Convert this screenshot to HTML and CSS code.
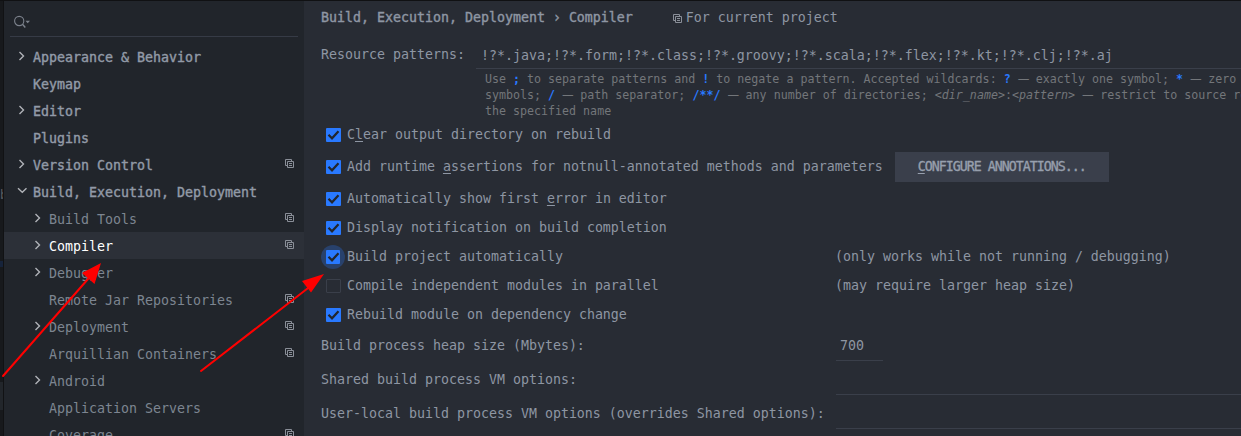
FILE: index.html
```html
<!DOCTYPE html>
<html lang="en">
<head>
<meta charset="utf-8">
<title>Settings</title>
<link rel="stylesheet" href="styles.css">
</head>
<body>
<svg class="defs" width="0" height="0">
  <symbol id="right" viewBox="0 0 10 10"><path d="M2.5 1 L6.5 5 L2.5 9" fill="none" stroke="#b0b3b8" stroke-width="1.4"/></symbol>
  <symbol id="down" viewBox="0 0 10 10"><path d="M1 2.2 L5.300 6.200 L9.500 2.200" fill="none" stroke="#b0b3b8" stroke-width="1.4"/></symbol>
  <symbol id="copy" viewBox="0 0 9 9"><path d="M2.5 6.5H.5V.5H6.5V2.5M2.5 2.5H8.5V8.5H2.5ZM4 4.5H7M4 6.5H7" fill="none" stroke="#8a8f98" stroke-width="1"/></symbol>
  <symbol id="check" viewBox="0 0 15 14"><path d="M2.5 6.800 L6 10.300 L12.500 3.200" fill="none" stroke="#22262d" stroke-width="2.200"/></symbol>
</svg>
<div class="window">
  <div class="backdrop"><span class="stray">b</span><i class="mark"></i><i class="tab"></i></div>
  <aside class="sidebar">
    <div class="search">
      <svg width="18" height="14" viewBox="0 0 18 14"><circle cx="5.200" cy="6" r="4.600" fill="none" stroke="#7c828c" stroke-width="1.1"/><path d="M8.500 9.200L11.300 12.500" stroke="#7c828c" stroke-width="1.4"/><path d="M11.500 5.700H16L13.700 8.300Z" fill="#7c828c"/></svg>
    </div>
    <ul class="tree">
      <li class="top"><svg class="chev"><use href="#right"/></svg><span>Appearance &amp; Behavior</span></li>
      <li class="top"><i class="chev"></i><span>Keymap</span></li>
      <li class="top"><svg class="chev"><use href="#right"/></svg><span>Editor</span></li>
      <li class="top"><i class="chev"></i><span>Plugins</span></li>
      <li class="top"><svg class="chev"><use href="#right"/></svg><span>Version Control</span><svg class="copy"><use href="#copy"/></svg></li>
      <li class="top"><svg class="chev"><use href="#down"/></svg><span>Build, Execution, Deployment</span></li>
      <li class="sub"><svg class="chev"><use href="#right"/></svg><span>Build Tools</span><svg class="copy"><use href="#copy"/></svg></li>
      <li class="sub selected"><svg class="chev"><use href="#right"/></svg><span>Compiler</span><svg class="copy"><use href="#copy"/></svg></li>
      <li class="sub"><svg class="chev"><use href="#right"/></svg><span>Debugger</span></li>
      <li class="sub"><i class="chev"></i><span>Remote Jar Repositories</span><svg class="copy"><use href="#copy"/></svg></li>
      <li class="sub"><svg class="chev"><use href="#right"/></svg><span>Deployment</span><svg class="copy"><use href="#copy"/></svg></li>
      <li class="sub"><i class="chev"></i><span>Arquillian Containers</span><svg class="copy"><use href="#copy"/></svg></li>
      <li class="sub"><svg class="chev"><use href="#right"/></svg><span>Android</span></li>
      <li class="sub"><i class="chev"></i><span>Application Servers</span></li>
      <li class="sub"><i class="chev"></i><span>Coverage</span><svg class="copy"><use href="#copy"/></svg></li>
    </ul>
  </aside>
  <main class="content">
    <header class="crumbs"><h1>Build, Execution, Deployment › Compiler</h1><svg class="scope-icon"><use href="#copy"/></svg><span>For current project</span></header>
    <div class="patterns"><label>Resource patterns:</label><div class="field">!?*.java;!?*.form;!?*.class;!?*.groovy;!?*.scala;!?*.flex;!?*.kt;!?*.clj;!?*.aj</div></div>
    <div class="hint">
      <p>Use <b>;</b> to separate patterns and <b>!</b> to negate a pattern. Accepted wildcards: <b>?</b> <s>—</s> exactly one symbol; <b>*</b> <s>—</s> zero</p>
      <p>symbols; <b>/</b> <s>—</s> path separator; <b>/**/</b> <s>—</s> any number of directories; <em>&lt;dir_name&gt;</em>:<em>&lt;pattern&gt;</em> <s>—</s> restrict to source roots</p>
      <p>the specified name</p>
    </div>
    <div class="option tall"><svg class="box on"><use href="#check"/></svg><span>C<u>l</u>ear output directory on rebuild</span></div>
    <div class="option tall"><svg class="box on"><use href="#check"/></svg><span>Add runtime <u>a</u>ssertions for notnull-annotated methods and parameters</span><button class="configure"><u>C</u>ONFIGURE ANNOTATIONS...</button></div>
    <div class="option mid"><svg class="box on"><use href="#check"/></svg><span>Automatically show first <u>e</u>rror in editor</span></div>
    <div class="option"><svg class="box on"><use href="#check"/></svg><span>Display notification on build completion</span></div>
    <div class="option"><svg class="box focused"><circle cx="7" cy="7" r="12" fill="#28416c"/><rect width="14" height="14" rx="1" fill="#2979ff"/><use href="#check"/></svg><span class="wide">Build project automatically</span><span>(only works while not running / debugging)</span></div>
    <div class="option"><i class="box off"></i><span class="wide">Compile independent modules in parallel</span><span>(may require larger heap size)</span></div>
    <div class="option"><svg class="box on"><use href="#check"/></svg><span>Rebuild module on dependency change</span></div>
    <div class="entry heap"><label>Build process heap size (Mbytes):</label><div class="value">700</div></div>
    <div class="entry"><label>Shared build process VM options:</label><div class="value"></div></div>
    <div class="entry"><label>User-local build process VM options (overrides Shared options):</label><div class="value"></div></div>
  </main>
  <svg class="arrows" viewBox="0 0 1241 436">
    <g stroke="#f00" stroke-width="2" stroke-linecap="round"><path d="M3 376L88 279"/><path d="M201 371L312 285"/></g>
    <path d="M101 263L94.500 284L82 273ZM324 274L311 292.500L302 281Z" fill="#f00"/>
  </svg>
</div>
</body>
</html>
```
FILE: styles.css
```css
* { box-sizing: border-box; }
body { margin: 0; background: #282c34; }
.defs { position: absolute; }
.window {
  position: relative;
  display: grid;
  grid-template-columns: 4px 300px 1fr;
  grid-template-rows: 435px;
  width: 1241px;
  height: 436px;
  overflow: hidden;
  border-top: 1px solid #101113;
  font: 13.29px/16px "DejaVu Sans Mono", monospace;
  color: #8e96a3;
  white-space: nowrap;
}
.backdrop {
  display: flex;
  flex-direction: column;
  padding-top: 186px;
  overflow: hidden;
  background: #17191c;
  border-right: 1px solid #111214;
}
.stray { height: 16px; color: #5b5d62; font-size: 12px; }
.mark { height: 6px; margin-top: 58px; background: #16233a; }
.tab { height: 28px; margin-top: 115px; background: #22262b; }

.sidebar { background: #21252b; overflow: hidden; }
.search {
  height: 36px;
  margin: 0 6px;
  padding: 14px 0 0 4px;
  border-bottom: 1px solid #363b46;
}
.search svg { display: block; }
.tree { list-style: none; margin: 6px 0 0; padding: 0; }
.tree li {
  display: flex;
  align-items: center;
  height: 27px;
  padding: 3px 10px 0 13px;
}
.tree .sub { padding-left: 29px; color: #7d8591; }
.tree .top { -webkit-text-stroke: .4px #929aa7; color: #929aa7; }
.tree .selected { background: #2c3038; color: #fff; }
.chev { width: 10px; height: 10px; margin: -4px 6px 0 0; flex: none; }
.copy { width: 9px; height: 9px; margin: -5px 0 0 auto; flex: none; }

.content { min-width: 0; padding-left: 17px; overflow: hidden; }
.crumbs { display: flex; align-items: center; height: 33px; }
.crumbs h1 { margin: 0; font: inherit; -webkit-text-stroke: .4px #8e96a3; }
.scope-icon { width: 9px; height: 9px; margin: 2px 4px 0 40px; }
.patterns { display: flex; height: 35px; }
.patterns label { width: 155px; padding-top: 13px; }
.field { flex: 1; padding: 14px 0 0 5px; border-bottom: 1px solid #3a3f4a; }
.hint {
  height: 50px;
  padding: 2px 0 0 164px;
  font-size: 11.65px;
  color: #73767a;
}
.hint p { margin: 0; height: 16px; line-height: 16px; }
.hint b { color: #2979ff; }
.hint s { font-family: "DejaVu Sans", sans-serif; text-decoration: none; letter-spacing: -.5px; }
.option { display: flex; align-items: center; height: 29px; padding: 1px 0 0 5px; }
.option.tall { height: 32px; padding-top: 0; }
.option.mid { height: 30px; padding-top: 2px; }
.box { width: 15px; height: 14px; margin-right: 6px; flex: none; border-radius: 1px; }
.on { background: #2979ff; }
.off { border: 1px solid #3a3f4a; }
.focused { overflow: visible; }
.wide { width: 488px; }
u { text-decoration: underline; text-decoration-thickness: 1px; text-underline-offset: 2px; }
.configure {
  width: 214px;
  height: 30px;
  margin-left: 12px;
  padding: 0 0 0 23px;
  border: 0;
  background: #3a3f4b;
  color: #979fad;
  font: inherit;
  letter-spacing: -1px;
  text-align: left;
  -webkit-text-stroke: .35px #979fad;
}
.entry { display: flex; height: 34px; }
.entry.heap { height: 32px; }
.entry label { width: 515px; padding-top: 11px; }
.entry .value { flex: 1; padding: 8px 0 0 4px; border-bottom: 1px solid #3a3f4a; }
.entry.heap label { padding-top: 9px; }
.entry.heap .value { flex: none; width: 47px; padding-top: 9px; }
.arrows { position: absolute; left: 0; top: -1px; width: 1241px; height: 436px; }
```
